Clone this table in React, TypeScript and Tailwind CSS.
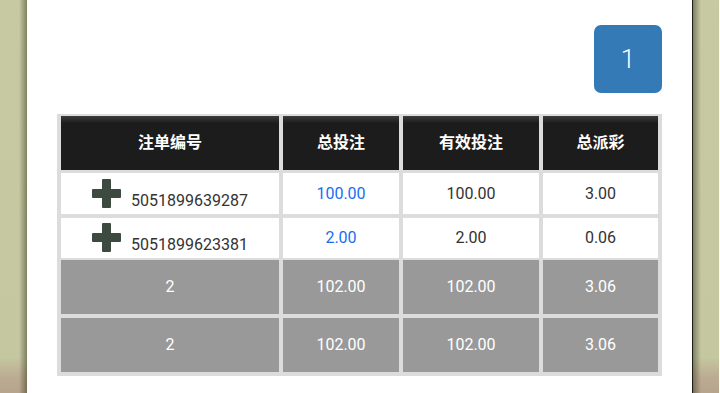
const rows = [
  { id: "5051899639287", total: "100.00", valid: "100.00", payout: "3.00" },
  { id: "5051899623381", total: "2.00", valid: "2.00", payout: "0.06" },
];

const cols = ["w-[218px]", "w-[116px]", "w-[136px]", "w-[115px]"];

function PlusIcon() {
  return (
    <svg width="29" height="29" viewBox="0 0 29 29" className="shrink-0">
      <rect x="10" y="0" width="9" height="29" rx="1" fill="#3c4a40" />
      <rect x="0" y="10" width="29" height="9" rx="1" fill="#3c4a40" />
    </svg>
  );
}

function SideStrip({ side }: { side: "left" | "right" }) {
  return (
    <div className="relative w-[27px] h-full bg-[linear-gradient(to_bottom,#c6c9a1_0%,#c4c7a0_91%,#bcab93_96%,#b8a48d_100%)]">
      {side === "left" ? (
        <div className="absolute right-0 top-0 h-full w-[8px] bg-[linear-gradient(to_right,rgba(0,0,0,0),rgba(40,40,20,0.45))]" />
      ) : (
        <>
          <div className="absolute left-0 top-0 h-full w-[1px] bg-[#1e1e1a]" />
          <div className="absolute left-[1px] top-0 h-full w-[8px] bg-[linear-gradient(to_left,rgba(0,0,0,0),rgba(40,40,20,0.45))]" />
        </>
      )}
    </div>
  );
}

export default function App() {
  const font = "font-['Roboto','Noto_Sans_CJK_SC',sans-serif]";
  return (
    <div className={`flex w-[720px] h-[393px] overflow-hidden ${font}`}>
      <SideStrip side="left" />
      <div className="w-[665px] h-full bg-white px-[30px] pt-[25px]">
        <div className="flex justify-end">
          <div className="w-[68px] h-[68px] rounded-[7px] bg-[#337ab7] flex items-center justify-center text-white text-[26px] font-light">
            1
          </div>
        </div>

        <div className="mt-[21px] bg-[#dcdcdc] px-[4px] pt-[2px] pb-[4px] flex flex-col">
          {/* header */}
          <div className="flex gap-[4px]">
            {["注单编号", "总投注", "有效投注", "总派彩"].map((h, i) => (
              <div
                key={h}
                className={`${cols[i]} h-[54px] flex items-center justify-center text-white text-[16px] font-bold bg-[linear-gradient(to_bottom,#3c3c3c_0px,#1c1c1c_7px,#1c1c1c_100%)]`}
              >
                {h}
              </div>
            ))}
          </div>

          {/* detail rows */}
          {rows.map((r, idx) => (
            <div
              key={r.id}
              className={`flex gap-[4px] ${idx === 0 ? "mt-[3px] h-[41px]" : "mt-[4px] h-[40px]"}`}
            >
              <div className={`${cols[0]} bg-white flex items-end justify-center pb-[3px] gap-[10px]`}>
                <div className="pb-[3px]">
                  <PlusIcon />
                </div>
                <span className="text-[16px] text-[#333] leading-[20px]">{r.id}</span>
              </div>
              <div className={`${cols[1]} bg-white flex items-center justify-center text-[16px] text-[#1a6ef0]`}>
                {r.total}
              </div>
              <div className={`${cols[2]} bg-white flex items-center justify-center text-[16px] text-[#333]`}>
                {r.valid}
              </div>
              <div className={`${cols[3]} bg-white flex items-center justify-center text-[16px] text-[#333]`}>
                {r.payout}
              </div>
            </div>
          ))}

          {/* totals */}
          {[0, 1].map((k) => (
            <div key={k} className={`flex gap-[4px] h-[54px] ${k === 0 ? "mt-[2px]" : "mt-[4px]"}`}>
              {["2", "102.00", "102.00", "3.06"].map((v, i) => (
                <div
                  key={i}
                  className={`${cols[i]} bg-[#999999] flex items-center justify-center text-white text-[16px]`}
                >
                  {v}
                </div>
              ))}
            </div>
          ))}
        </div>
      </div>
      <SideStrip side="right" />
    </div>
  );
}
